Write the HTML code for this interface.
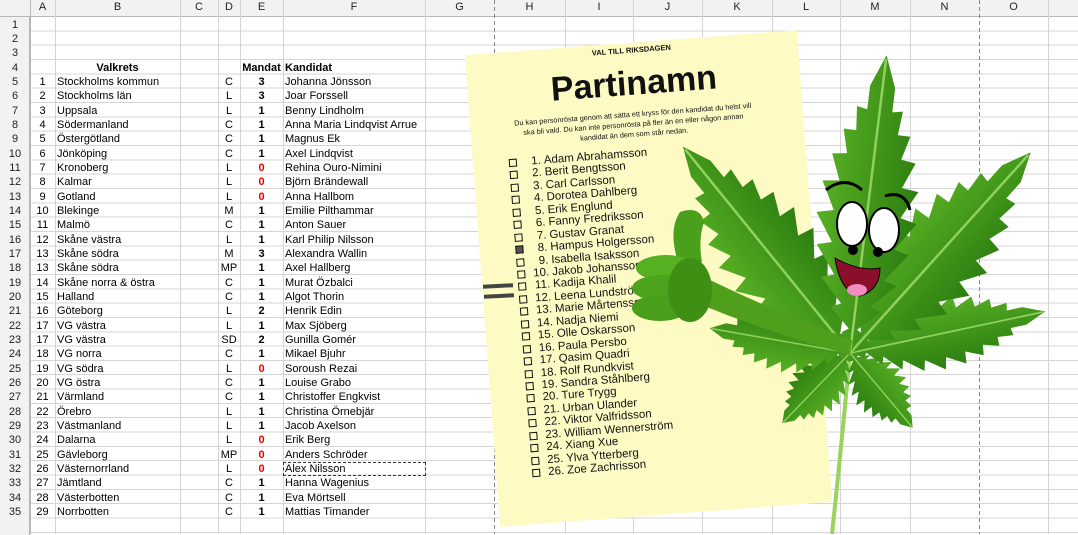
<!DOCTYPE html>
<html><head><meta charset="utf-8"><style>
*{margin:0;padding:0;box-sizing:border-box}
body{width:1078px;height:534px;overflow:hidden;background:#fff;font-family:"Liberation Sans",sans-serif;font-size:11px;color:#000;position:relative}
.hdr{position:absolute;left:0;top:0;width:1078px;height:17px;background:#f2f2f2;border-bottom:1px solid #b8b8b8}
.rn{position:absolute;left:0;top:17px;width:30px;height:518px;background:#f2f2f2;border-right:1px solid #b8b8b8}
.grid{position:absolute;left:30px;top:17px;width:1048px;height:518px;background:repeating-linear-gradient(to bottom,transparent 0,transparent 13.33px,#d4d4d4 13.33px,#d4d4d4 14.33px)}
.v{position:absolute;top:0;width:1px;height:534px;background:#d4d4d4}
.ch{position:absolute;top:1px;height:14px;text-align:center;font-size:11px;color:#222}
.r{position:absolute;left:0;height:14.33px;line-height:14.33px;width:440px;margin-top:1.5px}
.r span{position:absolute;top:0;white-space:nowrap}
.n{left:0;width:30px;text-align:center;color:#222}
.a{left:30px;width:25px;text-align:center}
.b{left:57px}
.d{left:218px;width:22px;text-align:center}
.e{left:240px;width:43px;text-align:center;font-weight:bold}
.f{left:285px}
.red{color:#e00}
.paper{position:absolute;left:482px;top:42px;width:333px;height:473px;background:#fdfbc3;transform:rotate(-4.3deg);color:#111}
.paper .t1{position:absolute;top:3px;left:0;width:100%;text-align:center;font-weight:bold;font-size:7.5px}
.paper .t2{position:absolute;top:22px;left:0;width:100%;text-align:center;font-weight:bold;font-size:34px}
.paper .t3{position:absolute;top:67px;left:38px;width:250px;text-align:center;font-size:7.3px;line-height:10px}
.li{position:absolute;left:36px;height:12.44px;font-size:11.5px;line-height:12px;white-space:nowrap}
.li i{display:inline-block;width:8px;height:8px;border:1.3px solid #111;vertical-align:-1px;margin-right:2px}
.li b{display:inline-block;width:22px;text-align:right;font-weight:normal;margin-right:3px}
</style></head><body>
<div class="hdr"></div><div class="rn"></div><div class="grid"></div>
<div class="v" style="left:30px;background:#b8b8b8"></div>
<div class="v" style="left:55px"></div><div class="v" style="left:180px"></div><div class="v" style="left:218px"></div><div class="v" style="left:240px"></div><div class="v" style="left:283px"></div><div class="v" style="left:425px"></div><div class="v" style="left:494px;background:repeating-linear-gradient(#888 0 4px,transparent 4px 7px)"></div><div class="v" style="left:565px"></div><div class="v" style="left:633px"></div><div class="v" style="left:702px"></div><div class="v" style="left:772px"></div><div class="v" style="left:840px"></div><div class="v" style="left:910px"></div><div class="v" style="left:979px;background:repeating-linear-gradient(#888 0 4px,transparent 4px 7px)"></div><div class="v" style="left:1048px"></div>
<div class="ch" style="left:30px;width:25px">A</div><div class="ch" style="left:55px;width:125px">B</div><div class="ch" style="left:180px;width:38px">C</div><div class="ch" style="left:218px;width:22px">D</div><div class="ch" style="left:240px;width:43px">E</div><div class="ch" style="left:283px;width:142px">F</div><div class="ch" style="left:425px;width:69px">G</div><div class="ch" style="left:494px;width:71px">H</div><div class="ch" style="left:565px;width:68px">I</div><div class="ch" style="left:633px;width:69px">J</div><div class="ch" style="left:702px;width:70px">K</div><div class="ch" style="left:772px;width:68px">L</div><div class="ch" style="left:840px;width:70px">M</div><div class="ch" style="left:910px;width:69px">N</div><div class="ch" style="left:979px;width:69px">O</div>

<div class="r" style="top:16px"><span class="n">1</span></div>
<div class="r" style="top:30.33px"><span class="n">2</span></div>
<div class="r" style="top:44.66px"><span class="n">3</span></div>
<div class="r" style="top:59px"><span class="n">4</span><span class="b" style="left:55px;width:125px;text-align:center;font-weight:bold">Valkrets</span><span class="e">Mandat</span><span class="f" style="font-weight:bold">Kandidat</span></div>
<div class="r" style="top:73.33px"><span class="n">5</span><span class="a">1</span><span class="b">Stockholms kommun</span><span class="d">C</span><span class="e">3</span><span class="f">Johanna Jönsson</span></div>
<div class="r" style="top:87.66px"><span class="n">6</span><span class="a">2</span><span class="b">Stockholms län</span><span class="d">L</span><span class="e">3</span><span class="f">Joar Forssell</span></div>
<div class="r" style="top:102px"><span class="n">7</span><span class="a">3</span><span class="b">Uppsala</span><span class="d">L</span><span class="e">1</span><span class="f">Benny Lindholm</span></div>
<div class="r" style="top:116.33px"><span class="n">8</span><span class="a">4</span><span class="b">Södermanland</span><span class="d">C</span><span class="e">1</span><span class="f">Anna Maria Lindqvist Arrue</span></div>
<div class="r" style="top:130.66px"><span class="n">9</span><span class="a">5</span><span class="b">Östergötland</span><span class="d">C</span><span class="e">1</span><span class="f">Magnus Ek</span></div>
<div class="r" style="top:145px"><span class="n">10</span><span class="a">6</span><span class="b">Jönköping</span><span class="d">C</span><span class="e">1</span><span class="f">Axel Lindqvist</span></div>
<div class="r" style="top:159.33px"><span class="n">11</span><span class="a">7</span><span class="b">Kronoberg</span><span class="d">L</span><span class="e red">0</span><span class="f">Rehina Ouro-Nimini</span></div>
<div class="r" style="top:173.66px"><span class="n">12</span><span class="a">8</span><span class="b">Kalmar</span><span class="d">L</span><span class="e red">0</span><span class="f">Björn Brändewall</span></div>
<div class="r" style="top:188px"><span class="n">13</span><span class="a">9</span><span class="b">Gotland</span><span class="d">L</span><span class="e red">0</span><span class="f">Anna Hallbom</span></div>
<div class="r" style="top:202.33px"><span class="n">14</span><span class="a">10</span><span class="b">Blekinge</span><span class="d">M</span><span class="e">1</span><span class="f">Emilie Pilthammar</span></div>
<div class="r" style="top:216.66px"><span class="n">15</span><span class="a">11</span><span class="b">Malmö</span><span class="d">C</span><span class="e">1</span><span class="f">Anton Sauer</span></div>
<div class="r" style="top:231px"><span class="n">16</span><span class="a">12</span><span class="b">Skåne västra</span><span class="d">L</span><span class="e">1</span><span class="f">Karl Philip Nilsson</span></div>
<div class="r" style="top:245.33px"><span class="n">17</span><span class="a">13</span><span class="b">Skåne södra</span><span class="d">M</span><span class="e">3</span><span class="f">Alexandra Wallin</span></div>
<div class="r" style="top:259.66px"><span class="n">18</span><span class="a">13</span><span class="b">Skåne södra</span><span class="d">MP</span><span class="e">1</span><span class="f">Axel Hallberg</span></div>
<div class="r" style="top:274px"><span class="n">19</span><span class="a">14</span><span class="b">Skåne norra &amp; östra</span><span class="d">C</span><span class="e">1</span><span class="f">Murat Özbalci</span></div>
<div class="r" style="top:288.33px"><span class="n">20</span><span class="a">15</span><span class="b">Halland</span><span class="d">C</span><span class="e">1</span><span class="f">Algot Thorin</span></div>
<div class="r" style="top:302.66px"><span class="n">21</span><span class="a">16</span><span class="b">Göteborg</span><span class="d">L</span><span class="e">2</span><span class="f">Henrik Edin</span></div>
<div class="r" style="top:317px"><span class="n">22</span><span class="a">17</span><span class="b">VG västra</span><span class="d">L</span><span class="e">1</span><span class="f">Max Sjöberg</span></div>
<div class="r" style="top:331.33px"><span class="n">23</span><span class="a">17</span><span class="b">VG västra</span><span class="d">SD</span><span class="e">2</span><span class="f">Gunilla Gomér</span></div>
<div class="r" style="top:345.66px"><span class="n">24</span><span class="a">18</span><span class="b">VG norra</span><span class="d">C</span><span class="e">1</span><span class="f">Mikael Bjuhr</span></div>
<div class="r" style="top:360px"><span class="n">25</span><span class="a">19</span><span class="b">VG södra</span><span class="d">L</span><span class="e red">0</span><span class="f">Soroush Rezai</span></div>
<div class="r" style="top:374.33px"><span class="n">26</span><span class="a">20</span><span class="b">VG östra</span><span class="d">C</span><span class="e">1</span><span class="f">Louise Grabo</span></div>
<div class="r" style="top:388.66px"><span class="n">27</span><span class="a">21</span><span class="b">Värmland</span><span class="d">C</span><span class="e">1</span><span class="f">Christoffer Engkvist</span></div>
<div class="r" style="top:403px"><span class="n">28</span><span class="a">22</span><span class="b">Örebro</span><span class="d">L</span><span class="e">1</span><span class="f">Christina Örnebjär</span></div>
<div class="r" style="top:417.33px"><span class="n">29</span><span class="a">23</span><span class="b">Västmanland</span><span class="d">L</span><span class="e">1</span><span class="f">Jacob Axelson</span></div>
<div class="r" style="top:431.66px"><span class="n">30</span><span class="a">24</span><span class="b">Dalarna</span><span class="d">L</span><span class="e red">0</span><span class="f">Erik Berg</span></div>
<div class="r" style="top:446px"><span class="n">31</span><span class="a">25</span><span class="b">Gävleborg</span><span class="d">MP</span><span class="e red">0</span><span class="f">Anders Schröder</span></div>
<div class="r" style="top:460.33px"><span class="n">32</span><span class="a">26</span><span class="b">Västernorrland</span><span class="d">L</span><span class="e red">0</span><span class="f" style="left:283px;width:143px;height:14px;border:1px dashed #333;padding-left:1px;line-height:12px">Alex Nilsson</span></div>
<div class="r" style="top:474.66px"><span class="n">33</span><span class="a">27</span><span class="b">Jämtland</span><span class="d">C</span><span class="e">1</span><span class="f">Hanna Wagenius</span></div>
<div class="r" style="top:489px"><span class="n">34</span><span class="a">28</span><span class="b">Västerbotten</span><span class="d">C</span><span class="e">1</span><span class="f">Eva Mörtsell</span></div>
<div class="r" style="top:503.33px"><span class="n">35</span><span class="a">29</span><span class="b">Norrbotten</span><span class="d">C</span><span class="e">1</span><span class="f">Mattias Timander</span></div>

<div class="paper">
<div class="t1">VAL TILL RIKSDAGEN</div>
<div class="t2">Partinamn</div>
<div class="t3">Du kan personrösta genom att sätta ett kryss för den kandidat du helst vill ska bli vald. Du kan inte personrösta på fler än en eller någon annan kandidat än dem som står nedan.</div>
<div class="li" style="top:105px"><i></i><b>1.</b>Adam Abrahamsson</div>
<div class="li" style="top:117.4px"><i></i><b>2.</b>Berit Bengtsson</div>
<div class="li" style="top:129.9px"><i></i><b>3.</b>Carl Carlsson</div>
<div class="li" style="top:142.3px"><i></i><b>4.</b>Dorotea Dahlberg</div>
<div class="li" style="top:154.8px"><i></i><b>5.</b>Erik Englund</div>
<div class="li" style="top:167.2px"><i></i><b>6.</b>Fanny Fredriksson</div>
<div class="li" style="top:179.6px"><i></i><b>7.</b>Gustav Granat</div>
<div class="li" style="top:192.1px"><i style="background:#555"></i><b>8.</b>Hampus Holgersson</div>
<div class="li" style="top:204.5px"><i></i><b>9.</b>Isabella Isaksson</div>
<div class="li" style="top:217px"><i></i><b>10.</b>Jakob Johansson</div>
<div class="li" style="top:229.4px"><i></i><b>11.</b>Kadija Khalil</div>
<div class="li" style="top:241.8px"><i></i><b>12.</b>Leena Lundström</div>
<div class="li" style="top:254.3px"><i></i><b>13.</b>Marie Mårtensson</div>
<div class="li" style="top:266.7px"><i></i><b>14.</b>Nadja Niemi</div>
<div class="li" style="top:279.2px"><i></i><b>15.</b>Olle Oskarsson</div>
<div class="li" style="top:291.6px"><i></i><b>16.</b>Paula Persbo</div>
<div class="li" style="top:304px"><i></i><b>17.</b>Qasim Quadri</div>
<div class="li" style="top:316.5px"><i></i><b>18.</b>Rolf Rundkvist</div>
<div class="li" style="top:328.9px"><i></i><b>19.</b>Sandra Ståhlberg</div>
<div class="li" style="top:341.4px"><i></i><b>20.</b>Ture Trygg</div>
<div class="li" style="top:353.8px"><i></i><b>21.</b>Urban Ulander</div>
<div class="li" style="top:366.2px"><i></i><b>22.</b>Viktor Valfridsson</div>
<div class="li" style="top:378.7px"><i></i><b>23.</b>William Wennerström</div>
<div class="li" style="top:391.1px"><i></i><b>24.</b>Xiang Xue</div>
<div class="li" style="top:403.6px"><i></i><b>25.</b>Ylva Ytterberg</div>
<div class="li" style="top:416px"><i></i><b>26.</b>Zoe Zachrisson</div>
</div>
<div style="position:absolute;left:483px;top:284px;width:30px;height:4px;background:#444;transform:rotate(-3deg)"></div>
<div style="position:absolute;left:484px;top:294px;width:30px;height:4px;background:#444;transform:rotate(-3deg)"></div>

<svg width="1078" height="534" style="position:absolute;left:0;top:0" viewBox="0 0 1078 534">
<defs>
<linearGradient id="lg" x1="0" y1="0" x2="0" y2="1"><stop offset="0" stop-color="#58b024"/><stop offset="1" stop-color="#2c7e10"/></linearGradient>
<symbol id="leaf" overflow="visible"><path d="M0,0 L10,-5 L12,-2 L22,-12 L24,-7 L36,-18 L38,-12 L52,-22 L54,-15 L68,-24 L70,-16 L84,-23 L85,-15 L98,-20 L99,-13 L111,-16 L111,-10 L123,-11 L122,-6 L134,-6 L150,0 L134,6 L122,6 L123,11 L111,10 L111,16 L99,13 L98,20 L85,15 L84,23 L70,16 L68,24 L54,15 L52,22 L38,12 L36,18 L24,7 L22,12 L12,2 L10,5 Z" fill="url(#lg)"/><path d="M0,0 L148,0" stroke="#8fd060" stroke-width="1.2"/></symbol>
</defs>
<path d="M850,353 Q842,440 832,534" stroke="#9ad35a" stroke-width="4" fill="none"/>
<g transform="translate(850,353)">
<use href="#leaf" transform="rotate(134) scale(0.65,1.2)"/>
<use href="#leaf" transform="rotate(50) scale(0.65,1.2)"/>
<use href="#leaf" transform="rotate(-170) scale(0.95,1.3)"/>
<use href="#leaf" transform="rotate(-12) scale(1.33,1.5)"/>
<use href="#leaf" transform="rotate(-129) scale(1.77,2.1)"/>
<use href="#leaf" transform="rotate(-48) scale(1.8,2.1)"/>
<use href="#leaf" transform="rotate(-83) scale(2.0,2.1)"/>
</g>
<!-- arm and thumb -->
<path d="M690,300 Q760,330 850,355 L852,340 Q770,310 700,275 Z" fill="#4f9e1c"/>
<path d="M678,262 Q668,230 680,212 Q700,205 704,222 Q698,240 702,262 Z" fill="#4aa01a"/>
<ellipse cx="666" cy="268" rx="30" ry="13" fill="#55b022"/>
<ellipse cx="662" cy="288" rx="30" ry="13" fill="#4ca41c"/>
<ellipse cx="660" cy="308" rx="28" ry="13" fill="#4a9f1a"/>
<ellipse cx="690" cy="290" rx="22" ry="32" fill="#3f8f14"/>
<!-- face -->
<path d="M826,190 Q845,175 862,190" stroke="#000" stroke-width="3" fill="none"/>
<path d="M885,196 Q905,190 910,210" stroke="#000" stroke-width="3" fill="none"/>
<ellipse cx="852" cy="224" rx="15" ry="22" fill="#fff" stroke="#000" stroke-width="2"/>
<ellipse cx="884" cy="230" rx="15" ry="22" fill="#fff" stroke="#000" stroke-width="2"/>
<circle cx="853" cy="250" r="5" fill="#000"/>
<circle cx="878" cy="252" r="5" fill="#000"/>
<path d="M835,258 Q860,272 880,268 Q880,290 860,296 Q840,292 835,258 Z" fill="#8a0f2a" stroke="#000" stroke-width="1"/>
<ellipse cx="857" cy="290" rx="10" ry="6" fill="#f08cc0"/>
</svg>
</body></html>
